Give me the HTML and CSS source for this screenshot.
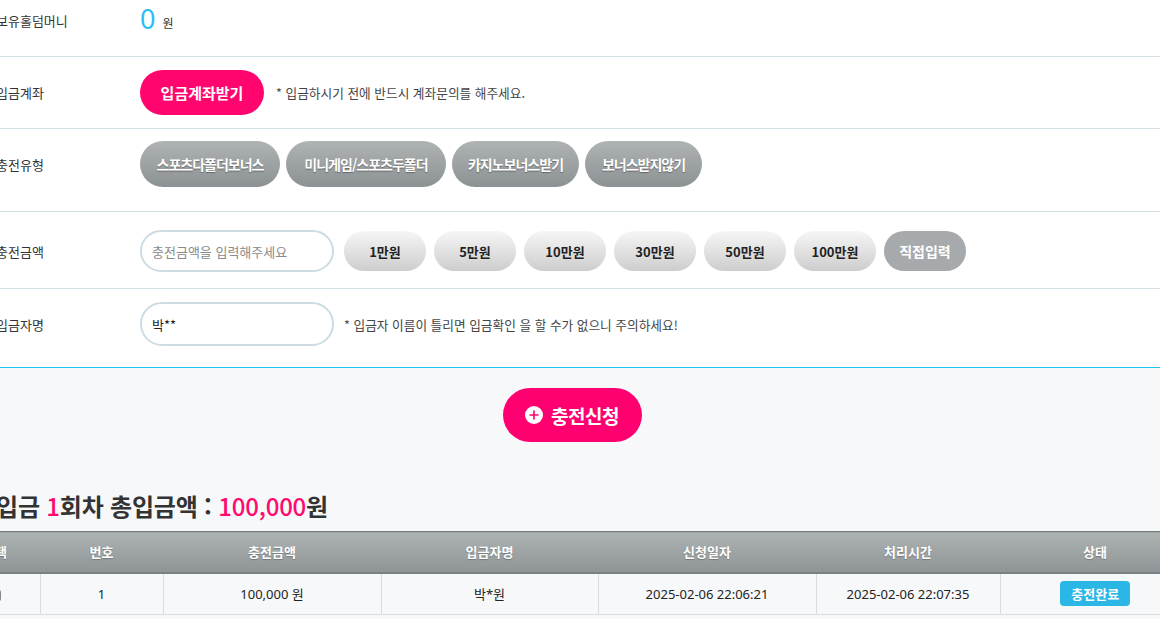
FILE: index.html
```html
<!DOCTYPE html>
<html lang="ko">
<head>
    <meta charset="UTF-8">
    <meta name="viewport" content="width=device-width, initial-scale=1.0">
    <title>충전신청</title>
    <link rel="stylesheet" href="styles.css">
</head>
<body>
    <div id="page">
        <div class="form-box">
            <div class="row row-money">
                <div class="label">보유홀덤머니</div>
                <div class="value"><span class="money">0</span><span class="won">원</span></div>
            </div>
            <div class="row row-account">
                <div class="label">입금계좌</div>
                <div class="value">
                    <button class="btn-pink">입금계좌받기</button>
                    <span class="note">* 입금하시기 전에 반드시 계좌문의를 해주세요.</span>
                </div>
            </div>
            <div class="row row-type">
                <div class="label">충전유형</div>
                <div class="value btn-list">
                    <button class="btn-gray">스포츠다폴더보너스</button>
                    <button class="btn-gray">미니게임/스포츠두폴더</button>
                    <button class="btn-gray">카지노보너스받기</button>
                    <button class="btn-gray">보너스받지않기</button>
                </div>
            </div>
            <div class="row row-amount">
                <div class="label">충전금액</div>
                <div class="value">
                    <input class="txt" type="text" placeholder="충전금액을 입력해주세요">
                    <div class="amount-list">
                        <button class="btn-light">1만원</button>
                        <button class="btn-light">5만원</button>
                        <button class="btn-light">10만원</button>
                        <button class="btn-light">30만원</button>
                        <button class="btn-light">50만원</button>
                        <button class="btn-light">100만원</button>
                        <button class="btn-light btn-direct">직접입력</button>
                    </div>
                </div>
            </div>
            <div class="row row-name">
                <div class="label">입금자명</div>
                <div class="value">
                    <input class="txt txt-name" type="text" value="박**">
                    <span class="note">* 입금자 이름이 틀리면 입금확인 을 할 수가 없으니 주의하세요!</span>
                </div>
            </div>
        </div>

        <div class="bottom-box">
            <div class="submit-wrap">
                <button class="btn-submit">
                    <svg width="18" height="18" viewBox="0 0 18 18">
                        <circle cx="9" cy="9" r="9" fill="#ffffff"/>
                        <path d="M9 4.5v9M4.5 9h9" stroke="#ff006c" stroke-width="1.6"/>
                    </svg>
                    충전신청
                </button>
            </div>

            <h2 class="total">입금 <em>1</em>회차 총입금액 : <em>100,000</em>원</h2>

            <table class="list">
                <colgroup>
                    <col style="width:90px">
                    <col style="width:123px">
                    <col style="width:218px">
                    <col style="width:217px">
                    <col style="width:218px">
                    <col style="width:184px">
                    <col style="width:190px">
                </colgroup>
                <thead>
                    <tr>
                        <th>선택</th>
                        <th>번호</th>
                        <th>충전금액</th>
                        <th>입금자명</th>
                        <th>신청일자</th>
                        <th>처리시간</th>
                        <th>상태</th>
                    </tr>
                </thead>
                <tbody>
                    <tr>
                        <td><span class="chk"></span></td>
                        <td>1</td>
                        <td>100,000 원</td>
                        <td>박*원</td>
                        <td>2025-02-06 22:06:21</td>
                        <td>2025-02-06 22:07:35</td>
                        <td><span class="state">충전완료</span></td>
                    </tr>
                </tbody>
            </table>
        </div>
    </div>
</body>
</html>
```

FILE: styles.css
```css
*{
    margin: 0;
    padding: 0;
    box-sizing: border-box;
}
html,body{
    overflow: hidden;
}
body{
    font-family: "Noto Sans CJK KR", "Noto Sans", sans-serif;
    font-size: 13px;
    color: #333333;
    background: #f7f8fa;
}
button{
    font-family: inherit;
    border: none;
    cursor: pointer;
    white-space: nowrap;
}
#page{
    width: 1240px;
    margin: -16px 0 0 -50px;
}
.form-box{
    background: #ffffff;
    border-bottom: 1px solid #1cc6f3;
}
.row{
    display: flex;
    align-items: center;
    padding-left: 46px;
    border-bottom: 1px solid #d4e0e6;
}
.row:last-child{
    border-bottom: none;
}
.label{
    width: 144px;
    flex-shrink: 0;
    font-size: 13px;
    color: #333333;
}
.value{
    display: flex;
    align-items: center;
}
.row-money{
    height: 73px;
}
.row-account{
    height: 72px;
}
.row-type{
    height: 83px;
    padding-top: 12px;
    padding-bottom: 24px;
}
.row-amount{
    height: 77px;
    padding-top: 18px;
    padding-bottom: 16px;
}
.row-name{
    height: 78px;
    padding-top: 13px;
    padding-bottom: 21px;
}
.money{
    font-size: 27px;
    line-height: 1;
    color: #29bff5;
    font-family: "Noto Sans", sans-serif;
    font-weight: normal;
    margin-top: -3px;
}
.won{
    font-size: 12px;
    margin-left: 7px;
    margin-top: 4px;
    color: #333333;
}
.btn-pink{
    width: 124px;
    height: 45px;
    border-radius: 23px;
    background: #ff056d;
    color: #ffffff;
    font-size: 15px;
    font-weight: bold;
}
.note{
    font-size: 12.7px;
    color: #444444;
    margin-left: 12px;
}
.btn-list{
    gap: 6px;
}
.btn-gray{
    height: 46px;
    padding: 0;
    border-radius: 23px;
    background: linear-gradient(#afb3b4, #8c9193);
    color: #ffffff;
    font-size: 14px;
    font-weight: bold;
    letter-spacing: -1px;
    text-shadow: 0 1px 1px rgba(0,0,0,0.35);
}
.btn-gray:nth-child(1){ width: 140px; }
.btn-gray:nth-child(2){ width: 160px; }
.btn-gray:nth-child(3){ width: 127px; }
.btn-gray:nth-child(4){ width: 117px; }
.txt{
    width: 194px;
    height: 42px;
    border: 2px solid #cddbe3;
    border-radius: 21px;
    padding: 0 10px;
    font-family: inherit;
    font-size: 13px;
    color: #222222;
    outline: none;
    background: #ffffff;
}
.txt::placeholder{
    color: #8a8a8a;
}
.txt-name{
    height: 44px;
    border-radius: 22px;
}
.amount-list{
    display: flex;
    gap: 8px;
    margin-left: 10px;
}
.btn-light{
    width: 82px;
    height: 40px;
    border-radius: 20px;
    background: linear-gradient(#f6f6f6, #cdcdcd);
    color: #222222;
    font-size: 13px;
    font-weight: bold;
}
.btn-light.btn-direct{
    background: #a6aaad;
    color: #ffffff;
    font-size: 14px;
}
.row-name .note{
    margin-left: 10px;
}
.submit-wrap{
    display: flex;
    justify-content: center;
    padding-top: 20px;
    padding-left: 4px;
}
.btn-submit{
    display: flex;
    align-items: center;
    justify-content: center;
    gap: 8px;
    width: 139px;
    height: 54px;
    border-radius: 27px;
    background: #ff0070;
    color: #ffffff;
    font-size: 19px;
    font-weight: bold;
    letter-spacing: -0.5px;
}
.total{
    margin-top: 44px;
    padding-left: 46px;
    font-size: 24px;
    line-height: 40px;
    font-weight: bold;
    letter-spacing: -0.2px;
    color: #333333;
}
.total em{
    font-style: normal;
    font-weight: 500;
    color: #ff0a6e;
}
.list{
    margin-top: 5px;
    width: 1240px;
    table-layout: fixed;
    border-collapse: collapse;
}
.list th{
    height: 41px;
    background: linear-gradient(#adb2b3, #8e9495);
    border-top: 1px solid #777c7e;
    border-bottom: 2px solid #7b8183;
    color: #ffffff;
    font-size: 13px;
    font-weight: bold;
    text-shadow: 0 1px 1px rgba(0,0,0,0.25);
}
.list td{
    height: 42px;
    text-align: center;
    border-left: 1px solid #dcdcdc;
    border-bottom: 1px solid #dcdcdc;
    font-family: "Noto Sans", "Noto Sans CJK KR", sans-serif;
    font-size: 13px;
    color: #222222;
}
.list td:first-child{
    border-left: none;
}
.chk{
    display: inline-block;
    width: 13px;
    height: 13px;
    border: 1px solid #888888;
    border-radius: 3px;
    background: #ffffff;
    vertical-align: middle;
}
.state{
    display: inline-block;
    width: 70px;
    height: 25px;
    line-height: 25px;
    border-radius: 4px;
    background: #2bb7e5;
    color: #ffffff;
    font-family: "Noto Sans CJK KR", sans-serif;
    font-weight: bold;
}
```
